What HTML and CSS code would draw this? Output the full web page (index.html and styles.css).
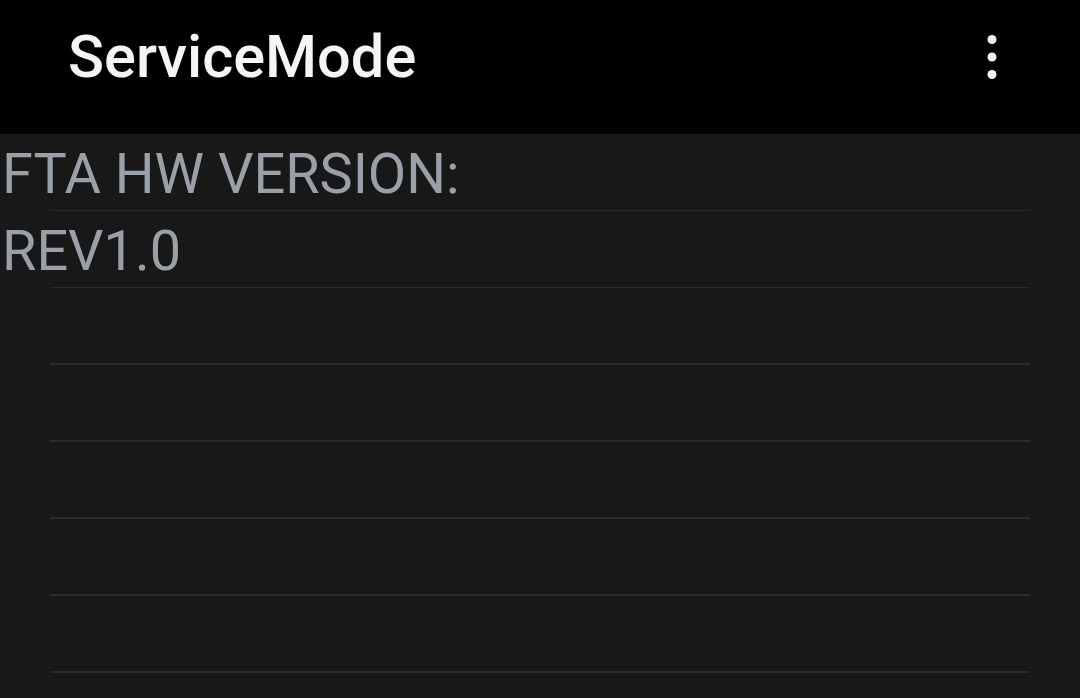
FILE: index.html
```html
<!DOCTYPE html>
<html lang="en">
  <head>
    <meta charset="UTF-8" />
    <meta name="viewport" content="width=device-width, initial-scale=1" />
    <title>ServiceMode</title>
    <link rel="stylesheet" href="styles.css">
  </head>
  <body>

    <div class="app-bar">
      <div class="title">ServiceMode</div>
      <button class="overflow" aria-label="More options">
        <svg width="12" height="48" viewBox="0 0 12 48">
          <circle cx="6" cy="6.5" r="4.5" fill="#f2f2f2" />
          <circle cx="6" cy="24" r="4.5" fill="#f2f2f2" />
          <circle cx="6" cy="41.5" r="4.5" fill="#f2f2f2" />
        </svg>
      </button>
    </div>

    <div class="list">
      <div class="row">FTA HW VERSION:</div>
      <div class="row">REV1.0</div>
      <div class="row"></div>
      <div class="row"></div>
      <div class="row"></div>
      <div class="row"></div>
      <div class="row"></div>
      <div class="row"></div>
    </div>

  </body>
</html>
```

FILE: styles.css
```css
html, body{
  margin: 0;
  height: 100%;
  overflow: hidden;
  background: #181818;
  font-family: Roboto, "Noto Sans", sans-serif;
}

.app-bar{
  height: 134px;
  box-sizing: border-box;
  display: flex;
  align-items: center;
  justify-content: space-between;
  padding: 0 82px 20px 68px;
  background: #000000;
}

.title{
  font-size: 59.5px;
  font-weight: 500;
  color: #f5f5f5;
}

.overflow{
  display: flex;
  padding: 0;
  border: none;
  background: none;
  cursor: pointer;
}

.row{
  height: 77px;
  display: flex;
  flex-direction: column;
  padding: 4px 0 0 2px;
  box-sizing: border-box;
  font-size: 55.8px;
  line-height: 72px;
  color: #9aa0a7;
  white-space: nowrap;
}

/* divider under each row, inset on both sides */
.row::after{
  content: '';
  height: 2px;
  margin: auto 50px 0 48px;
  background: #2b2b2b;
}
```
